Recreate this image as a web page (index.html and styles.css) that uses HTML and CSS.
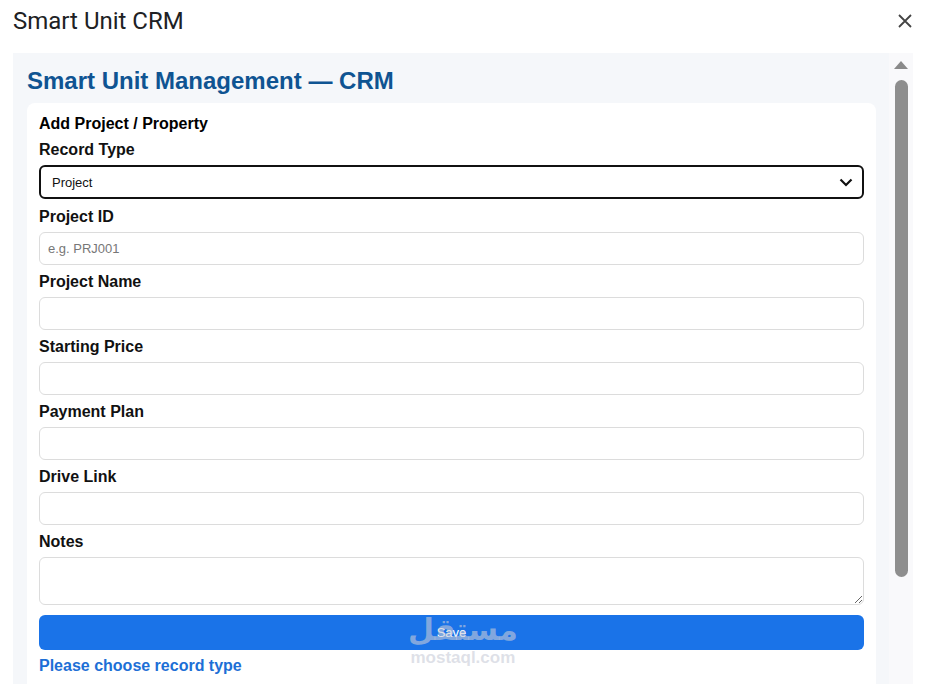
FILE: index.html
```html
<!DOCTYPE html>
<html>
  <head>
  <meta charset='UTF-8'>
  <title>Smart Unit CRM</title>
    <link rel="stylesheet" href="styles.css">
  </head>
  <body>
    <div class="dialog-header">
      <span class="dialog-title">Smart Unit CRM</span>
      <svg class="close" width="16" height="16" viewBox="0 0 16 16">
        <path d="M2 2 L14 14 M14 2 L2 14" stroke="#444" stroke-width="1.8" fill="none"/>
      </svg>
    </div>
    <div class="frame">
      <div class="app">
        <h1>Smart Unit Management — CRM</h1>
        <div class="card">
          <h3>Add Project / Property</h3>
          <label>Record Type</label>
          <div class="select-wrap">
            <select>
              <option>Project</option>
              <option>Property</option>
            </select>
            <svg class="chevron" width="14" height="9" viewBox="0 0 14 9">
              <path d="M1.5 1.5 L7 7 L12.5 1.5" stroke="#111" stroke-width="2.2" fill="none"/>
            </svg>
          </div>
          <label>Project ID</label>
          <input type="text" placeholder="e.g. PRJ001">
          <label>Project Name</label>
          <input type="text">
          <label>Starting Price</label>
          <input type="text">
          <label>Payment Plan</label>
          <input type="text">
          <label>Drive Link</label>
          <input type="text">
          <label>Notes</label>
          <textarea></textarea>
          <button>Save</button>
          <p class="msg">Please choose record type</p>
        </div>
      </div>
      <div class="scrollbar">
        <div class="arrow"></div>
        <div class="thumb"></div>
      </div>
    </div>
    <div class="watermark">
      <span class="wm-ar">مستقل</span>
      <span class="wm-en">mostaql.com</span>
    </div>
  </body>
</html>
```

FILE: styles.css
```css
html {
  background: white;
}
body {
  margin: 0;
  font-family: "Liberation Sans", Arial, sans-serif;
  height: 684px;
  overflow: hidden;
  position: relative;
}
.dialog-header {
  height: 42px;
  padding: 0 20px 0 13px;
  display: flex;
  align-items: center;
  justify-content: space-between;
}
.dialog-title {
  font-family: Roboto, sans-serif;
  font-size: 24px;
  color: #202124;
}
.frame {
  margin: 11px 0 0 13px;
  width: 900px;
  height: 631px;
  display: flex;
  overflow: hidden;
}
.app {
  flex: 1;
  background: #f5f7fa;
  padding: 14px 13px 0 14px;
  overflow: hidden;
}
h1 {
  margin: 0 0 8px;
  font-size: 24px;
  line-height: 28px;
  color: #0f5492;
}
.card {
  background: white;
  border-radius: 8px;
  padding: 11px 12px 20px;
}
h3 {
  margin: 0 0 7px;
  font-size: 16px;
  line-height: 19px;
}
label {
  display: block;
  font-size: 16px;
  line-height: 19px;
  font-weight: bold;
  margin-bottom: 6px;
  color: #111;
}
.select-wrap {
  position: relative;
  margin-bottom: 8px;
}
select {
  display: block;
  width: 100%;
  height: 34px;
  appearance: none;
  -webkit-appearance: none;
  background: white;
  border: 2px solid #111;
  border-radius: 6px;
  padding: 0 11px;
  font-family: "Liberation Sans", Arial, sans-serif;
  font-size: 13px;
  color: #111;
}
.chevron {
  position: absolute;
  right: 11px;
  top: 13px;
}
input, textarea {
  display: block;
  box-sizing: border-box;
  width: 100%;
  height: 33px;
  margin: 0 0 7px;
  border: 1px solid #dcdcdc;
  border-radius: 6px;
  padding: 0 8px;
  font-family: "Liberation Sans", Arial, sans-serif;
  font-size: 13px;
}
input::placeholder {
  color: #777;
}
textarea {
  height: 48px;
  margin-bottom: 10px;
  padding: 8px;
}
button {
  display: block;
  width: 100%;
  height: 35px;
  border: 0;
  border-radius: 6px;
  background: #1a73e8;
  color: white;
  font-family: "Liberation Sans", Arial, sans-serif;
  font-size: 13px;
}
.msg {
  margin: 6px 0 0;
  font-size: 16px;
  line-height: 19px;
  font-weight: bold;
  color: #1d6fd6;
}
.scrollbar {
  width: 24px;
  background: #f9f9fb;
  display: flex;
  flex-direction: column;
  align-items: center;
}
.arrow {
  margin-top: 8px;
  width: 0;
  height: 0;
  border-left: 7px solid transparent;
  border-right: 7px solid transparent;
  border-bottom: 8px solid #8a8a8a;
}
.thumb {
  margin-top: 11px;
  width: 13px;
  height: 497px;
  border-radius: 7px;
  background: #8e8e8e;
}
.watermark {
  position: absolute;
  left: 408px;
  top: 612px;
  display: flex;
  flex-direction: column;
  align-items: center;
  pointer-events: none;
  color: rgba(200, 204, 216, 0.6);
  font-weight: bold;
}
.wm-ar {
  font-family: "DejaVu Sans", sans-serif;
  font-size: 30px;
  line-height: 36px;
}
.wm-en {
  font-size: 17px;
  line-height: 20px;
}
```
